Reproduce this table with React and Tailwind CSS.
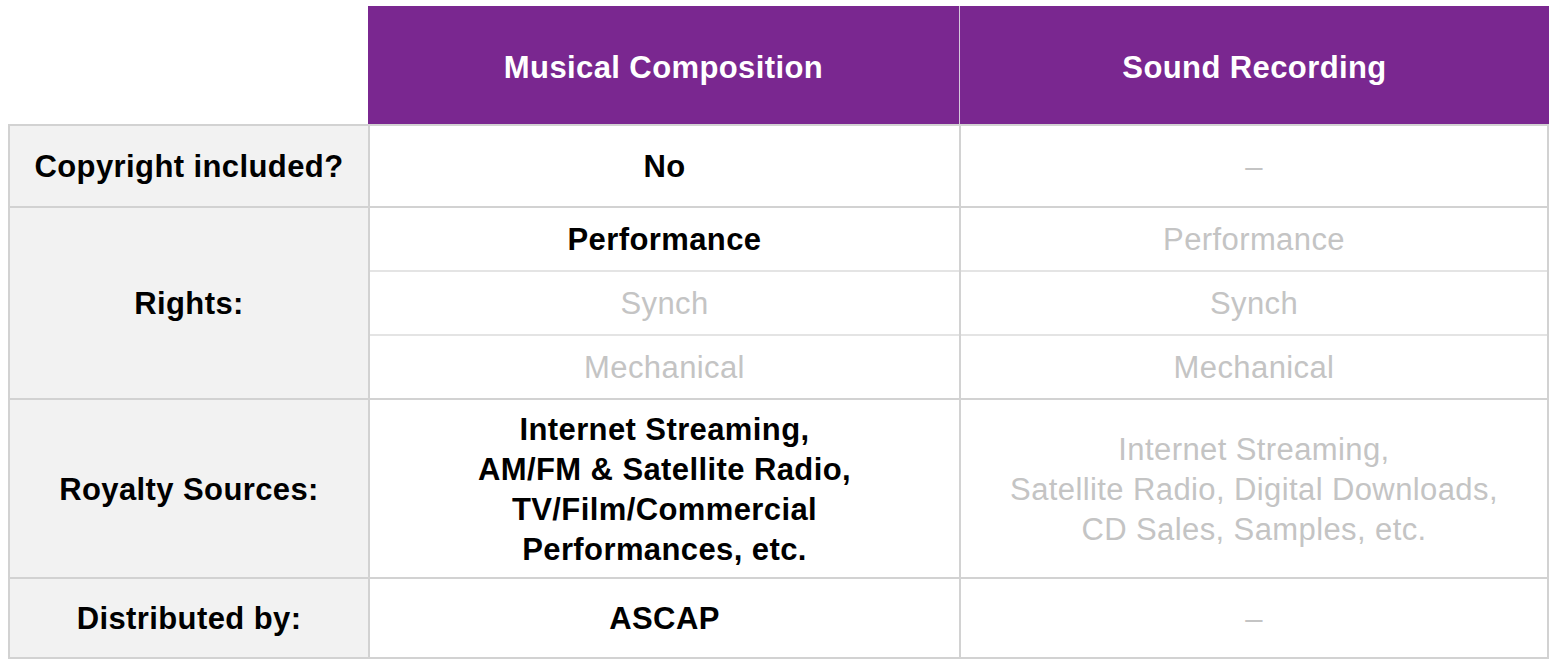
import React from 'react';

const font = { fontFamily: '"Liberation Sans", Arial, sans-serif' };

const Dash = () => <span className="text-[#c4c4c4]">–</span>;

export default function App() {
    return (
        <div className="bg-white w-[1558px] h-[668px] pl-[8px] pt-[6px] tracking-[0.4px]" style={font}>
            {/* header */}
            <div className="flex h-[118px]">
                <div className="w-[360px]" />
                <div className="flex bg-[#7a2790] w-[1181px]">
                    <div className="w-[591px] flex items-center justify-center pt-[6px] text-white font-bold text-[31px]">Musical Composition</div>
                    <div className="w-[1px] bg-[#d6c8dc]" />
                    <div className="flex-1 flex items-center justify-center pt-[6px] text-white font-bold text-[31px]">Sound Recording</div>
                </div>
            </div>

            {/* body */}
            <div className="grid grid-cols-[358px_589px_586px] gap-[2px] p-[2px] bg-[#d2d2d2] w-[1541px] text-[31px] text-center">
                <Label className="h-[80px]">Copyright included?</Label>
                <Cell className="font-bold text-black">No</Cell>
                <Cell><Dash /></Cell>

                <Label className="h-[190px]">Rights:</Label>
                <SubRows items={[['Performance', true], ['Synch', false], ['Mechanical', false]]} />
                <SubRows items={[['Performance', false], ['Synch', false], ['Mechanical', false]]} />

                <Label className="h-[177px]">Royalty Sources:</Label>
                <Cell className="font-bold text-black leading-[40px]">
                    Internet Streaming,<br />AM/FM &amp; Satellite Radio,<br />TV/Film/Commercial<br />Performances, etc.
                </Cell>
                <Cell className="text-[#c4c4c4] leading-[40px]">
                    Internet Streaming,<br />Satellite Radio, Digital Downloads,<br />CD Sales, Samples, etc.
                </Cell>

                <Label className="h-[78px]">Distributed by:</Label>
                <Cell className="font-bold text-black">ASCAP</Cell>
                <Cell><Dash /></Cell>
            </div>
        </div>
    );
}

const Label = ({ className = '', children }) => (
    <div className={`bg-[#f2f2f2] flex items-center justify-center pt-[3px] font-bold text-black ${className}`}>{children}</div>
);

const Cell = ({ className = '', children }) => (
    <div className={`bg-white flex flex-col items-center justify-center pt-[3px] ${className}`}>{children}</div>
);

const SubRows = ({ items }) => (
    <div className="bg-[#e4e4e4] flex flex-col gap-[2px]">
        {items.map(([text, strong]) => (
            <div key={text} className={`bg-white h-[62px] flex items-center justify-center pt-[3px] ${strong ? 'font-bold text-black' : 'text-[#c4c4c4]'}`}>{text}</div>
        ))}
    </div>
);
